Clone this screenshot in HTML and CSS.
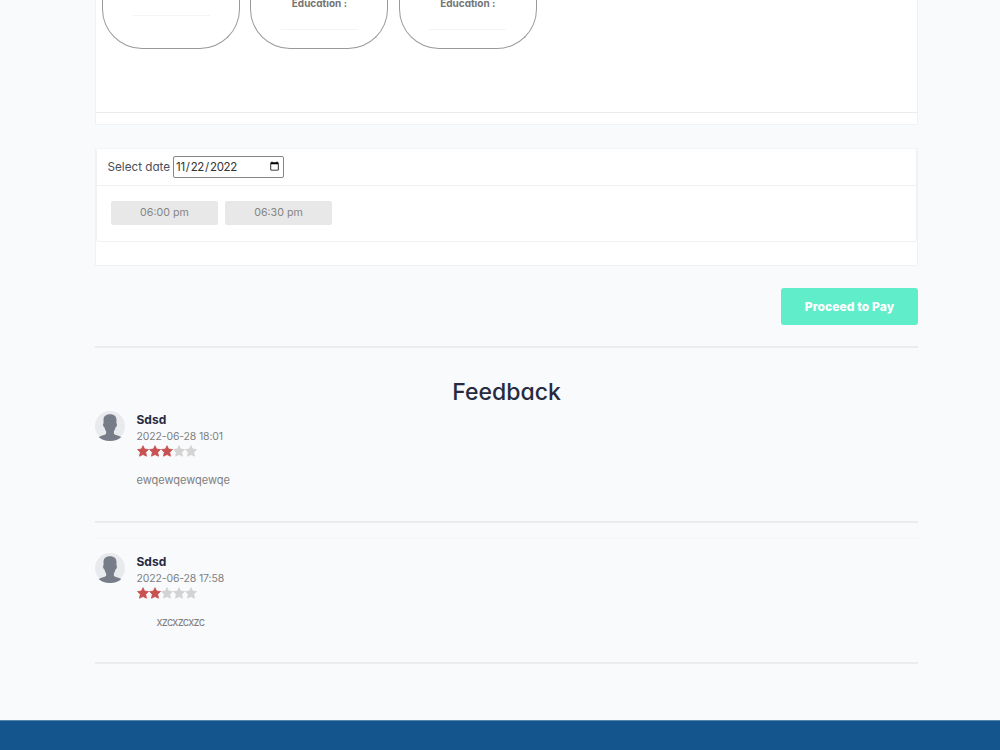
FILE: index.html
```html
<!DOCTYPE html>
<html lang="en">
<head>
    <meta charset="UTF-8">
    <meta name="viewport" content="width=device-width, initial-scale=1.0">
    <title>Booking</title>
    <link rel="stylesheet" href="styles.css">
</head>
<body>

    <!-- Shared icons -->
    <svg class="sprite" width="0" height="0">
        <symbol id="avatar" viewBox="0 0 30 30">
            <circle cx="15" cy="15" r="15" fill="#e9eaed"/>
            <path d="M15 3.300c-4.600 0-6.600 2.500-6.500 6.100l.1 2.800c-.8.400-.7 1.400-.3 2.700.3.900.8 1.500 1.300 1.600.3 1.800.8 2.900 1.500 3.800v2.500c-1.200 1.500-4.500 1.700-7.400 3.100C6.300 28.400 10.300 30 15 30s8.700-1.600 11.300-4.100c-2.900-1.400-6.200-1.600-7.400-3.100v-2.500c.7-.9 1.200-2 1.500-3.800.5-.1 1-.7 1.300-1.600.4-1.300.5-2.300-.3-2.700l.1-2.800C21.600 5.800 19.600 3.300 15 3.300z" fill="#777d88"/>
        </symbol>
        <symbol id="star" viewBox="0 0 12 12">
            <path d="M6 .7l1.600 3.400 3.900.4-2.800 2.800.8 3.900L6 9.500l-3.500 1.700.8-3.900L.5 4.500l3.900-.4z" stroke-width=".8" stroke-linejoin="round"/>
        </symbol>
    </svg>

    <div class="container">

        <!-- Doctors -->
        <div class="card doctors">
            <div class="doctor-list">
                <div class="doctor first"><hr></div>
                <div class="doctor"><b>Education :</b><hr></div>
                <div class="doctor"><b>Education :</b><hr></div>
            </div>
        </div>

        <!-- Date and time slots -->
        <div class="card booking">
            <div class="schedule">
                <div class="schedule-header">
                    <label for="date">Select date</label>
                    <input type="date" id="date" value="2022-11-22">
                </div>
                <div class="slots">
                    <span class="slot">06:00 pm</span>
                    <span class="slot">06:30 pm</span>
                </div>
            </div>
        </div>

        <div class="submit-section">
            <button class="pay-btn">Proceed to Pay</button>
        </div>

        <!-- Feedback -->
        <h2>Feedback</h2>

        <div class="comment">
            <svg class="avatar"><use href="#avatar"/></svg>
            <div class="comment-body">
                <h5>Sdsd</h5>
                <p class="date">2022-06-28 18:01</p>
                <div class="rating">
                    <svg class="on"><use href="#star"/></svg>
                    <svg class="on"><use href="#star"/></svg>
                    <svg class="on"><use href="#star"/></svg>
                    <svg><use href="#star"/></svg>
                    <svg><use href="#star"/></svg>
                </div>
                <p class="text">ewqewqewqewqe</p>
            </div>
        </div>

        <div class="comment second">
            <svg class="avatar"><use href="#avatar"/></svg>
            <div class="comment-body">
                <h5>Sdsd</h5>
                <p class="date">2022-06-28 17:58</p>
                <div class="rating">
                    <svg class="on"><use href="#star"/></svg>
                    <svg class="on"><use href="#star"/></svg>
                    <svg><use href="#star"/></svg>
                    <svg><use href="#star"/></svg>
                    <svg><use href="#star"/></svg>
                </div>
                <p class="text indent">xzcxzcxzc</p>
            </div>
        </div>

    </div>

    <footer></footer>

</body>
</html>
```

FILE: styles.css
```css
/* Base */
* { margin: 0; padding: 0; box-sizing: border-box; }
body { display: flex; flex-direction: column; height: 750px; overflow: hidden; background: #f8fafc; color: #272b41; font-family: Inter, sans-serif; font-feature-settings: "cv11"; font-size: 11px; }
.sprite { position: absolute; }
.container { width: 823px; margin-left: 95px; flex: 1; }
.card { background: #fff; border: 1px solid #f0f1f2; }

/* Doctors */
.doctors { height: 125px; border-top: 0; padding-bottom: 11px; }
.doctor-list { display: flex; gap: 10.4px; height: 113px; padding-left: 6px; border-bottom: 1px solid #ebebeb; }
.doctor { width: 138px; height: 49px; border: 1px solid #999; border-top: 0; border-radius: 0 0 40px 40px; text-align: center; color: #757575; font-size: 10px; line-height: 6px; }
.doctor b { display: block; height: 25px; }
.doctor hr { width: 77px; margin: 4px auto 0; border: 0; border-top: 1px solid #f4f4f4; }
.doctor.first hr { margin-top: 15px; }

/* Schedule */
.booking { height: 118px; margin-top: 23px; border-top-color: #f3f4f5; }
.schedule { height: 93px; border: 1px solid #f0f1f3; border-top: 0; border-radius: 3px; }
.schedule-header { display: flex; align-items: center; gap: 2px; height: 37px; padding-left: 10.5px; border-bottom: 1px solid #f0f0f0; }
.schedule-header label { width: 63.500px; font-size: 11.700px; color: #4b4f5c; white-space: nowrap; }
.schedule-header input { width: 111px; height: 22px; padding: 0 1px; border: 1px solid #858585; border-radius: 2px; background: #fff; color: #333; font-family: inherit; font-size: 11.500px; letter-spacing: -0.3px; }
.slots { display: flex; gap: 7px; padding: 15px 14px; }
.slot { width: 107px; height: 24px; border-radius: 2px; background: #e8e8e8; color: #858585; font-size: 10.7px; line-height: 24px; text-align: center; }

/* Button */
.submit-section { display: flex; justify-content: flex-end; height: 82px; padding-top: 22px; border-bottom: 2px solid #eaecee; }
.pay-btn { width: 137px; height: 37px; padding-bottom: 1px; border: 0; border-radius: 3px; background: #5fedca; color: #fff; font-family: inherit; font-size: 12px; font-weight: 800; letter-spacing: 0.1px; }

/* Feedback */
h2 { margin-top: 29px; height: 34px; font-size: 23px; font-weight: 500; line-height: 30px; text-align: center; }
.comment { display: flex; gap: 11.500px; height: 112px; border-bottom: 2px solid #eaecee; }
.comment.second { height: 126px; margin-top: 15px; padding-top: 15px; border-top: 1px solid #f3f5f6; }
.comment.second .avatar, .comment.second .comment-body { margin-top: -1px; }
.avatar { width: 30px; height: 30px; }
h5 { font-size: 12px; font-weight: 700; line-height: 18px; }
.date { color: #808080; line-height: 16px; font-size: 10.500px; letter-spacing: -0.15px; }
.rating { display: flex; height: 12px; }
.rating svg { width: 12px; height: 12px; fill: #d3d3d3; stroke: #d3d3d3; }
.rating .on { fill: #c85151; stroke: #c85151; }
.text { margin-top: 15px; color: #808080; line-height: 16px; }
.text.indent { padding-left: 20px; letter-spacing: -0.7px; }

footer { height: 30px; background: #15558d; border-top: 1px solid #5784aa; }
```
